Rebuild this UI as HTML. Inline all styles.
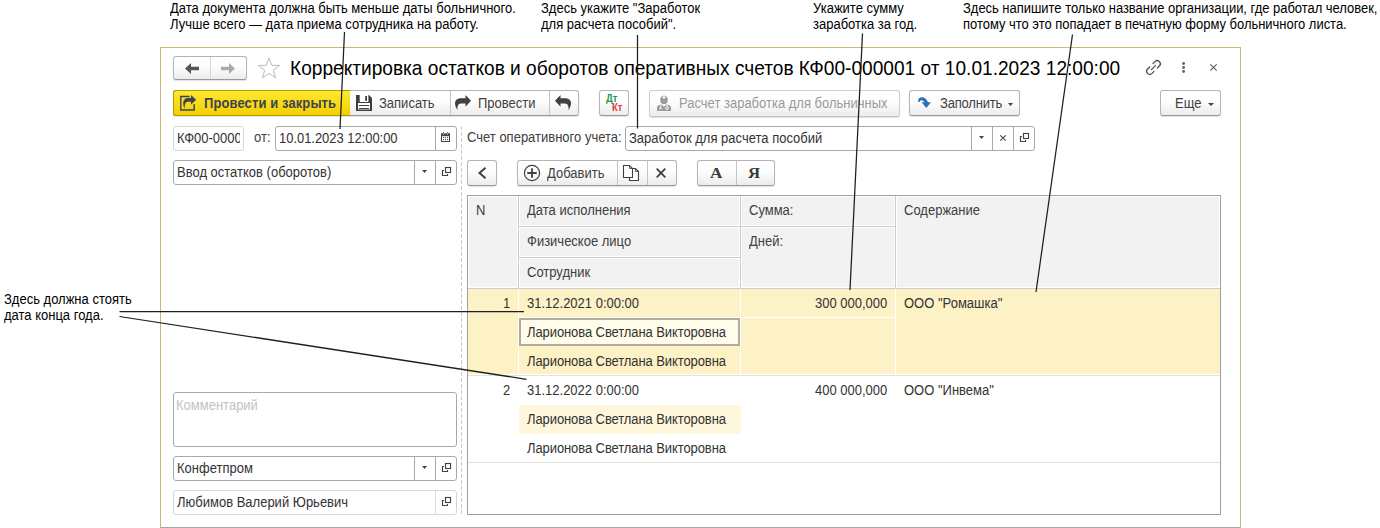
<!DOCTYPE html>
<html><head><meta charset="utf-8">
<style>
*{box-sizing:border-box;margin:0;padding:0}
html,body{width:1380px;height:528px;overflow:hidden;background:#fff}
body{position:relative;font-family:"Liberation Sans",sans-serif;font-size:13px;line-height:15px;color:#333}
.a{position:absolute;white-space:nowrap;transform:scaleY(1.07);transform-origin:0 12px}
.ann{position:absolute;white-space:nowrap;color:#000;font-size:13px;line-height:15px;transform:scaleY(1.075);transform-origin:0 12px}
.form{position:absolute;left:160px;top:47px;width:1081px;height:481px;border:1px solid #c8b872;border-bottom-color:#a5a5a5}
.btn{position:absolute;border:1px solid #b4b4b4;border-bottom-color:#999;border-radius:3px;background:linear-gradient(#fff 0%,#fdfdfd 45%,#ececec 100%);box-shadow:0 1px 1px rgba(0,0,0,.12)}
.div{position:absolute;top:0;bottom:0;width:1px;background:#c4c4c4}
.fld{position:absolute;border:1px solid #a9a9a9;border-radius:3px;background:#fff}
.fldro{position:absolute;border:1px solid #d6d6d6;border-radius:3px;background:#fff}
.vd{position:absolute;top:0;bottom:0;width:1px;background:#a9a9a9}
.lbl{color:#404040}
svg{position:absolute;overflow:visible}
.hc{position:absolute;border:1px solid #fff;background:#f2f2f2}
</style></head><body>

<!-- annotations -->
<div class="ann" style="left:170px;top:0.8px">Дата документа должна быть меньше даты больничного.<br>Лучше всего — дата приема сотрудника на работу.</div>
<div class="ann" style="left:541px;top:0.8px">Здесь укажите "Заработок<br>для расчета пособий".</div>
<div class="ann" style="left:813px;top:0.8px">Укажите сумму<br>заработка за год.</div>
<div class="ann" style="left:963px;top:0.8px;letter-spacing:-0.03px">Здесь напишите только название организации, где работал человек,<br>потому что это попадает в печатную форму больничного листа.</div>
<div class="ann" style="left:4px;top:291.5px">Здесь должна стоять<br>дата конца года.</div>

<div class="form"></div>


<!-- header row -->
<div class="btn" style="left:173px;top:56px;width:74px;height:24px">
  <div class="div" style="left:36px;background:#d6d6d6"></div>
</div>
<svg style="left:185px;top:63px" width="14" height="11" viewBox="0 0 14 11"><path d="M0 5.5 L6 0 L6 3.8 L14 3.8 L14 7.2 L6 7.2 L6 11 Z" fill="#555"/></svg>
<svg style="left:221px;top:63px" width="14" height="11" viewBox="0 0 14 11"><path d="M14 5.5 L8 0 L8 3.8 L0 3.8 L0 7.2 L8 7.2 L8 11 Z" fill="#aaa"/></svg>
<svg style="left:257px;top:57px" width="24" height="22" viewBox="0 0 24 22"><path d="M12 1 L14.7 8.3 L22.5 8.5 L16.3 13.3 L18.6 20.8 L12 16.4 L5.4 20.8 L7.7 13.3 L1.5 8.5 L9.3 8.3 Z" fill="none" stroke="#b5bac0" stroke-width="1"/></svg>
<div class="a" style="left:290px;top:58px;font-size:19.13px;line-height:22px;color:#000;transform:scaleY(1.06);transform-origin:0 17.6px">Корректировка остатков и оборотов оперативных счетов КФ00-000001 от 10.01.2023 12:00:00</div>
<svg style="left:1145px;top:59px" width="17" height="17" viewBox="0 0 17 17"><g fill="none" stroke="#505050" stroke-width="1.3" stroke-linecap="round"><path d="M6.4 10.6 L10.6 6.4"/><path d="M8 4.6 L10 2.6 A3.11 3.11 0 0 1 14.4 7 L12.4 9"/><path d="M9 12.4 L7 14.4 A3.11 3.11 0 0 1 2.6 10 L4.6 8"/></g></svg>
<svg style="left:1181px;top:60px" width="6" height="13" viewBox="0 0 6 13"><g fill="#666"><circle cx="2.6" cy="3.5" r="1.45"/><circle cx="2.6" cy="7.5" r="1.45"/><circle cx="2.6" cy="11.5" r="1.45"/></g></svg>
<svg style="left:1210px;top:64px" width="7" height="7" viewBox="0 0 7 7"><path d="M0.3 0.3 L6.7 6.7 M6.7 0.3 L0.3 6.7" stroke="#555" stroke-width="1.05"/></svg>

<!-- toolbar -->
<div class="btn" style="left:173px;top:90px;width:406px;height:26px;overflow:hidden">
  <div style="position:absolute;left:0;top:0;width:176px;height:100%;background:linear-gradient(#ffe733,#f2d000)"></div>
  <div class="div" style="left:276px"></div>
  <div class="div" style="left:375px"></div>
</div>
<div style="position:absolute;left:173px;top:90px;width:177px;height:26px;border:1px solid #b59b00;border-right:none;border-radius:3px 0 0 3px"></div>
<svg style="left:180px;top:95px" width="17" height="16" viewBox="0 0 17 16"><path d="M9.6 1.5 L0.8 1.5 L0.8 15 L14.2 15 L14.2 9" fill="none" stroke="#3f4350" stroke-width="1.4"/><path d="M16.2 4.75 L11 0 L11 3 L8 3 C5 3 3.2 5 3.2 8 C3.2 10 3.8 12 4.5 13.5 C4.7 11 5 8.5 6 7.5 C6.5 7 7.2 6.8 8 6.8 L11 6.8 L11 9.5 Z" fill="#3f4350"/></svg>
<div class="a" style="left:204px;top:95.5px;font-weight:bold;color:#3f4350;letter-spacing:0.1px">Провести и закрыть</div>
<svg style="left:356px;top:95px" width="16" height="16" viewBox="0 0 16 16"><path d="M0 0 L13 0 L16 3 L16 16 L0 16 Z" fill="#404040"/><rect x="3.7" y="0" width="8.7" height="7" fill="#fff"/><rect x="9.2" y="1" width="1.8" height="4.8" fill="#404040"/><rect x="2" y="8" width="12" height="6.5" fill="#fff"/><rect x="3" y="10" width="10" height="1" fill="#404040"/><rect x="3" y="13" width="10" height="1" fill="#404040"/></svg>
<div class="a lbl" style="left:379px;top:96px">Записать</div>
<svg style="left:455px;top:95px" width="16" height="16" viewBox="0 0 16 16"><path d="M16 5.8 L10.5 0 L10.5 3.3 L6 3.3 C2 3.3 0 5.5 0 8.5 C0 11 1.5 13.5 2.5 15.3 C2 12 3 8.5 6 8.5 L10.5 8.5 L10.5 11.8 Z" fill="#404040"/></svg>
<div class="a lbl" style="left:478px;top:96px">Провести</div>
<svg style="left:555px;top:95px" width="16" height="16" viewBox="0 0 16 16"><path d="M0 5.8 L5.5 0 L5.5 3.3 L10 3.3 C14 3.3 16 5.5 16 8.5 C16 11 14.5 13.5 13.5 15.3 C14 12 13 8.5 10 8.5 L5.5 8.5 L5.5 11.8 Z" fill="#404040"/></svg>

<div class="btn" style="left:599px;top:90px;width:30px;height:26px"></div>
<div class="a" style="left:606px;top:94px;font-size:9.5px;line-height:10px;font-weight:bold;color:#1f9a4c">Дт</div>
<div class="a" style="left:612px;top:103px;font-size:9.5px;line-height:10px;font-weight:bold;color:#e0393c">Кт</div>

<div class="btn" style="left:649px;top:90px;width:251px;height:27px;border-color:#cfcfcf;border-bottom-color:#c4c4c4"></div>
<svg style="left:657px;top:95px" width="14" height="16" viewBox="0 0 14 16"><g fill="#9b9b9b"><path d="M4 2.6 C4 0.2 10 0.2 10 2.6 Z"/><path d="M3.3 2.6 L10.7 2.6 L10.7 5.8 C10.7 7.8 9 9.3 7 9.3 C5 9.3 3.3 7.8 3.3 5.8 Z"/><path d="M0 16 L0 12.8 C0 10.8 1.6 9.8 4.4 9.4 L7 11.8 L9.6 9.4 C12.4 9.8 14 10.8 14 12.8 L14 16 Z"/></g><ellipse cx="7" cy="2.3" rx="1.1" ry="1.4" fill="#fff"/><g fill="none" stroke="#fff" stroke-width="0.9"><path d="M4 10 L3.5 12.6"/><circle cx="3.5" cy="13.4" r="0.9"/><path d="M9.8 10 C10.6 10.8 10.8 11.6 10.5 12.2"/><circle cx="10" cy="13.2" r="1.3"/></g></svg>
<div class="a" style="left:679px;top:96px;color:#999">Расчет заработка для больничных</div>

<div class="btn" style="left:909px;top:90px;width:111px;height:26px"></div>
<svg style="left:918px;top:96px" width="13" height="13" viewBox="0 0 13 13"><path d="M0 4.8 C0 0.8 7.2 -1.2 10 6.3 L13 6.3 L8.3 12 L3.6 6.3 L6.4 6.3 C5.2 3.8 2.8 3.4 1.8 5.6 C1.3 6.5 0 6.2 0 4.8 Z" fill="#2a73b5"/></svg>
<div class="a lbl" style="left:940px;top:96px;letter-spacing:-0.2px">Заполнить</div>
<svg style="left:1008px;top:103px" width="5" height="3" viewBox="0 0 5 3"><path d="M0 0 L5 0 L2.5 3 Z" fill="#444"/></svg>

<div class="btn" style="left:1160px;top:90px;width:61px;height:26px"></div>
<div class="a lbl" style="left:1175px;top:96px">Еще</div>
<svg style="left:1208px;top:103px" width="6" height="3" viewBox="0 0 6 3"><path d="M0 0 L6 0 L3 3 Z" fill="#444"/></svg>

<!-- row 2 -->
<div class="fldro" style="left:173px;top:126px;width:71px;height:25px;overflow:hidden"><div style="position:absolute;left:0;top:0;width:66px;height:23px;overflow:hidden"><div class="a" style="left:3px;top:4px">КФ00-000001</div></div></div>
<div class="a lbl" style="left:254px;top:130px">от:</div>
<div class="fld" style="left:275px;top:126px;width:182px;height:25px">
  <div class="a" style="left:3px;top:4px;letter-spacing:-0.04px">10.01.2023 12:00:00</div>
  <div class="vd" style="left:159px"></div>
</div>
<svg style="left:441px;top:132px" width="9" height="10" viewBox="0 0 9 10"><path d="M0 1.2 H9 V10 H0 Z" fill="#444"/><rect x="1" y="4.2" width="7" height="4.8" fill="#fff"/><g fill="#444"><circle cx="2.5" cy="5.6" r="0.65"/><circle cx="4.5" cy="5.6" r="0.65"/><circle cx="6.5" cy="5.6" r="0.65"/><circle cx="2.5" cy="7.6" r="0.65"/><circle cx="4.5" cy="7.6" r="0.65"/><circle cx="6.5" cy="7.6" r="0.65"/></g><rect x="2" y="0" width="1.2" height="2.4" fill="#fff"/><rect x="5.8" y="0" width="1.2" height="2.4" fill="#fff"/><rect x="2.2" y="0" width="0.8" height="1.6" fill="#444"/><rect x="6" y="0" width="0.8" height="1.6" fill="#444"/></svg>

<div style="position:absolute;left:461px;top:126px;width:1px;height:388px;background:repeating-linear-gradient(#cbcbcb 0 4px,transparent 4px 6px)"></div>

<div class="a lbl" style="left:467px;top:130px">Счет оперативного учета:</div>
<div class="fld" style="left:625px;top:126px;width:410px;height:25px">
  <div class="a" style="left:3px;top:4px">Заработок для расчета пособий</div>
  <div class="vd" style="left:345px"></div>
  <div class="vd" style="left:366px"></div>
  <div class="vd" style="left:387px"></div>
</div>
<svg style="left:979px;top:136px" width="5" height="3" viewBox="0 0 5 3"><path d="M0 0 L5 0 L2.5 3 Z" fill="#444"/></svg>
<svg style="left:999.5px;top:134.5px" width="6" height="6" viewBox="0 0 6 6"><path d="M0.3 0.3 L5.7 5.7 M5.7 0.3 L0.3 5.7" stroke="#444" stroke-width="1.05"/></svg>
<svg style="left:1020px;top:133px" width="9" height="9" viewBox="0 0 9 9"><g fill="none" stroke="#444" stroke-width="1.15"><rect x="3.5" y="0.5" width="5" height="5"/><path d="M1.9 3.5 H0.5 V8.5 H5.5 V7.1"/></g></svg>

<!-- row 3 -->
<div class="fld" style="left:173px;top:160px;width:284px;height:25px">
  <div class="a" style="left:3px;top:4px">Ввод остатков (оборотов)</div>
  <div class="vd" style="left:240px"></div>
  <div class="vd" style="left:261px"></div>
</div>
<svg style="left:422px;top:170px" width="5" height="3" viewBox="0 0 5 3"><path d="M0 0 L5 0 L2.5 3 Z" fill="#444"/></svg>
<svg style="left:442px;top:167px" width="9" height="9" viewBox="0 0 9 9"><g fill="none" stroke="#444" stroke-width="1.15"><rect x="3.5" y="0.5" width="5" height="5"/><path d="M1.9 3.5 H0.5 V8.5 H5.5 V7.1"/></g></svg>

<div class="btn" style="left:467px;top:160px;width:30px;height:26px"></div>
<svg style="left:478px;top:167px" width="9" height="12" viewBox="0 0 9 12"><path d="M7.5 0.8 L1.5 6 L7.5 11.2" fill="none" stroke="#404040" stroke-width="2"/></svg>

<div class="btn" style="left:517px;top:160px;width:160px;height:26px">
  <div class="div" style="left:99px"></div>
  <div class="div" style="left:129px"></div>
</div>
<svg style="left:523px;top:164px" width="18" height="18" viewBox="0 0 18 18"><circle cx="9" cy="9" r="7.6" fill="none" stroke="#404040" stroke-width="1.2"/><path d="M4.3 9 H13.7 M9 4.3 V13.7" stroke="#404040" stroke-width="1.8"/></svg>
<div class="a lbl" style="left:547px;top:166px">Добавить</div>
<svg style="left:623px;top:165px" width="16" height="16" viewBox="0 0 16 16"><g fill="#fff" stroke="#404040" stroke-width="1.1" stroke-linejoin="miter"><path d="M6.5 3.5 H12.5 L15.5 6.5 V15.5 H6.5 Z"/><path d="M12.5 3.5 V6.5 H15.5" fill="none" stroke-width="0.8"/><path d="M0.5 0.5 H6.5 L9.5 3.5 V12.5 H0.5 Z"/><path d="M6.5 0.5 V3.5 H9.5" fill="none" stroke-width="0.8"/></g></svg>
<svg style="left:656px;top:168px" width="10" height="10" viewBox="0 0 10 10"><path d="M0.7 0.7 L9.3 9.3 M9.3 0.7 L0.7 9.3" stroke="#404040" stroke-width="1.8"/></svg>

<div class="btn" style="left:697px;top:160px;width:78px;height:26px">
  <div class="div" style="left:38px"></div>
</div>
<div class="a" style="left:710px;top:165px;font-family:'Liberation Serif',serif;font-weight:bold;font-size:15px;line-height:16px;color:#3a3a3a;transform:scaleX(1.15);transform-origin:0 0">A</div>
<div class="a" style="left:748px;top:165px;font-family:'Liberation Serif',serif;font-weight:bold;font-size:15px;line-height:16px;color:#3a3a3a;transform:scaleX(1.12);transform-origin:0 0">Я</div>


<!-- bottom left -->
<div class="fld" style="left:173px;top:392px;width:284px;height:55px"><div class="a" style="left:2px;top:5px;color:#c2c2c2">Комментарий</div></div>
<div class="fld" style="left:173px;top:456px;width:284px;height:25px">
  <div class="a" style="left:3px;top:4px">Конфетпром</div>
  <div class="vd" style="left:240px"></div>
  <div class="vd" style="left:261px"></div>
</div>
<svg style="left:422px;top:466px" width="5" height="3" viewBox="0 0 5 3"><path d="M0 0 L5 0 L2.5 3 Z" fill="#444"/></svg>
<svg style="left:442px;top:463px" width="9" height="9" viewBox="0 0 9 9"><g fill="none" stroke="#444" stroke-width="1.15"><rect x="3.5" y="0.5" width="5" height="5"/><path d="M1.9 3.5 H0.5 V8.5 H5.5 V7.1"/></g></svg>
<div class="fldro" style="left:173px;top:490px;width:284px;height:25px">
  <div class="a" style="left:3px;top:4px">Любимов Валерий Юрьевич</div>
  <div class="vd" style="left:261px;background:#dcdcdc"></div>
</div>
<svg style="left:442px;top:497px" width="9" height="9" viewBox="0 0 9 9"><g fill="none" stroke="#444" stroke-width="1.15"><rect x="3.5" y="0.5" width="5" height="5"/><path d="M1.9 3.5 H0.5 V8.5 H5.5 V7.1"/></g></svg>

<!-- table -->
<div style="position:absolute;left:467px;top:195px;width:754px;height:320px;border:1px solid #a0a0a0;background:#fff"></div>
<div style="position:absolute;left:468px;top:196px;width:752px;height:93px;background:#cdcdcd"></div>
<div class="hc" style="left:468px;top:196px;width:50px;height:92px"></div>
<div class="hc" style="left:519px;top:196px;width:221px;height:30px"></div>
<div class="hc" style="left:519px;top:227px;width:221px;height:30px"></div>
<div class="hc" style="left:519px;top:258px;width:221px;height:30px"></div>
<div class="hc" style="left:741px;top:196px;width:154px;height:30px"></div>
<div class="hc" style="left:741px;top:227px;width:154px;height:61px"></div>
<div class="hc" style="left:896px;top:196px;width:324px;height:92px"></div>
<div class="a lbl" style="left:476px;top:203px">N</div>
<div class="a lbl" style="left:527px;top:203px">Дата исполнения</div>
<div class="a lbl" style="left:527px;top:234px">Физическое лицо</div>
<div class="a lbl" style="left:527px;top:265px">Сотрудник</div>
<div class="a lbl" style="left:749px;top:203px">Сумма:</div>
<div class="a lbl" style="left:749px;top:234px">Дней:</div>
<div class="a lbl" style="left:904px;top:203px">Содержание</div>

<!-- row 1 -->
<div style="position:absolute;left:468px;top:289px;width:752px;height:85px;background:#fdf1c6"></div>
<div style="position:absolute;left:468px;top:374px;width:752px;height:1px;background:#fff"></div>
<div style="position:absolute;left:468px;top:375px;width:752px;height:1px;background:#e2e2e2"></div>
<div style="position:absolute;left:518px;top:289px;width:1px;height:85px;background:#fff"></div>
<div style="position:absolute;left:740px;top:289px;width:1px;height:85px;background:#fff"></div>
<div style="position:absolute;left:895px;top:289px;width:1px;height:85px;background:#fff"></div>
<div style="position:absolute;left:519px;top:317px;width:376px;height:1px;background:#fff"></div>
<div style="position:absolute;left:519px;top:345px;width:221px;height:1px;background:#fff"></div>
<div style="position:absolute;left:519px;top:318px;width:221px;height:28px;border:2px solid #b0ac9c;background:#fffcea"></div>
<div class="a" style="left:503px;top:296px">1</div>
<div class="a" style="left:527px;top:296px">31.12.2021 0:00:00</div>
<div class="a" style="left:527px;top:325px;letter-spacing:-0.09px">Ларионова Светлана Викторовна</div>
<div class="a" style="left:527px;top:354px;letter-spacing:-0.09px">Ларионова Светлана Викторовна</div>
<div class="a" style="left:815px;top:296px">300 000,000</div>
<div class="a" style="left:904px;top:296px">ООО "Ромашка"</div>

<!-- row 2 -->
<div style="position:absolute;left:519px;top:405px;width:222px;height:29px;background:#fef7dc"></div>
<div style="position:absolute;left:468px;top:462px;width:752px;height:1px;background:#e2e2e2"></div>
<div class="a" style="left:503px;top:383px">2</div>
<div class="a" style="left:527px;top:383px">31.12.2022 0:00:00</div>
<div class="a" style="left:527px;top:412px;letter-spacing:-0.09px">Ларионова Светлана Викторовна</div>
<div class="a" style="left:527px;top:441px;letter-spacing:-0.09px">Ларионова Светлана Викторовна</div>
<div class="a" style="left:815px;top:383px">400 000,000</div>
<div class="a" style="left:904px;top:383px">ООО "Инвема"</div>

<!-- annotation lines -->
<svg style="left:0;top:0" width="1380" height="528" viewBox="0 0 1380 528"><g stroke="#1e1e1e" stroke-width="1.25" fill="none">
<path d="M344.5 32 L340 129"/>
<path d="M637.5 35 L637.5 128.5"/>
<path d="M862.5 33.5 L850 290"/>
<path d="M1072.5 34.5 L1036 292"/>
<path d="M119.5 311.5 L524 311.5"/>
<path d="M119.5 316.5 L526.5 379.3"/>
</g></svg>

</body></html>
